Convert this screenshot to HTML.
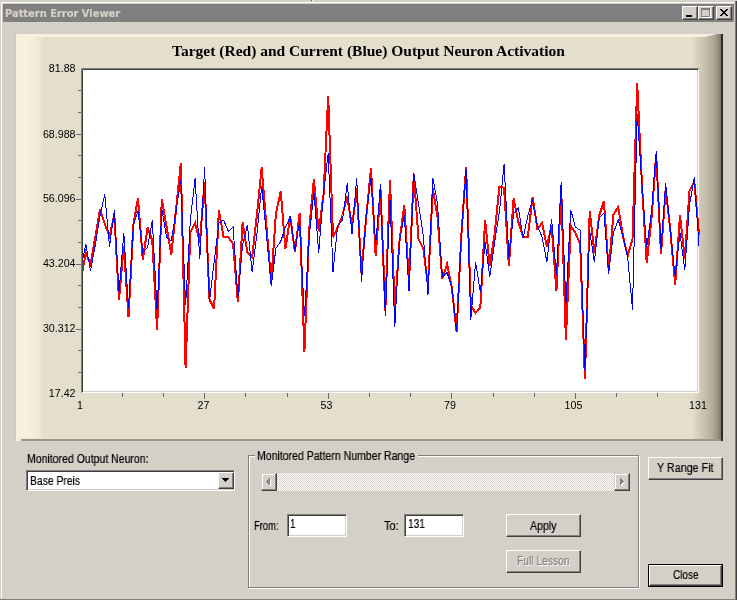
<!DOCTYPE html>
<html><head><meta charset="utf-8"><title>Pattern Error Viewer</title>
<style>
html,body{margin:0;padding:0}
body{width:737px;height:600px;overflow:hidden;background:#d4d0c8;position:relative;font-family:"Liberation Sans",sans-serif;font-size:12px;color:#000}
div,span{position:absolute;box-sizing:border-box}
.t{will-change:transform;white-space:nowrap;transform-origin:0 0;line-height:14px;height:14px;-webkit-text-stroke:0.2px currentColor}
.btn{background:#d4d0c8;border:1px solid;border-color:#fff #404040 #404040 #fff;box-shadow:inset -1px -1px 0 #808080,inset 1px 1px 0 #d4d0c8}
.sbtn{background:#d4d0c8;border:1px solid;border-color:#d4d0c8 #404040 #404040 #d4d0c8;box-shadow:inset -1px -1px 0 #808080,inset 1px 1px 0 #fff}
.sunk{background:#fff;border:1px solid;border-color:#808080 #fff #fff #808080;box-shadow:inset 1px 1px 0 #404040,inset -1px -1px 0 #d4d0c8}
</style></head><body>
<!-- window frame -->
<div style="left:0;top:599px;width:737px;height:1px;background:#808080"></div>
<div style="left:735px;top:1px;width:1px;height:599px;background:#808080"></div>
<div style="left:736px;top:1px;width:1px;height:599px;background:#404040"></div>
<div style="left:1px;top:2px;width:733px;height:1px;background:#fff"></div>
<div style="left:1px;top:2px;width:1px;height:596px;background:#fff"></div>
<div style="left:311px;top:0;width:1px;height:1px;background:#505050"></div><div style="left:312px;top:0;width:1px;height:1px;background:#fff"></div>
<!-- title bar -->
<div style="left:3px;top:4px;width:731px;height:18px;background:#808080"></div>
<span class="t" id="ttl" style="left:4.5px;top:7px;font-family:'DejaVu Sans Condensed','DejaVu Sans','Liberation Sans',sans-serif;font-weight:bold;font-size:11px;color:#d4d0c8">Pattern Error Viewer</span>
<div class="btn" style="left:682px;top:6px;width:16px;height:14px"><div style="left:3px;top:8px;width:6px;height:2px;background:#000"></div></div>
<div class="btn" style="left:698px;top:6px;width:16px;height:14px"><div style="left:2px;top:1px;width:9px;height:9px;border:1px solid #808080;border-top-width:2px;box-shadow:1px 1px 0 #fff"></div></div>
<div class="btn" style="left:716px;top:6px;width:16px;height:14px"><svg style="position:absolute;left:3px;top:2px" width="8" height="7" viewBox="0 0 8 7"><path d="M0 0h2v1h1v1h2v-1h1v-1h2v1h-1v1h-1v1h-1v1h1v1h1v1h1v1h-2v-1h-1v-1h-2v1h-1v1h-2v-1h1v-1h1v-1h1v-1h-1v-1h-1v-1h-1z" fill="#000"/></svg></div>

<!-- chart panel -->
<div id="panel" style="left:15px;top:34px;width:708px;height:407px;background:#e4decd"></div>
<div style="left:14px;top:34px;width:30px;height:407px;background:linear-gradient(90deg,#d2cbbd 0,#d2cbbd 1px,#d3cbb8 1px,#d3cbb8 2px,#f7f0df 2px,#f7f0df 13px,#f3ecda 20px,#ebe4d3 27px,#e4decd 30px)"></div>
<div style="left:690px;top:34px;width:33px;height:407px;background:linear-gradient(90deg,#e4decd 0,#e4decd 2px,#d4cdbc 9px,#c8c1b0 14px,#bab3a2 20px,#a8a191 25px,#989282 27.5px,#807a6c 30.5px,#807a6c 31px,#2e2a22 31px,#2e2a22 33px)"></div>
<div style="left:16px;top:34px;width:701px;height:3px;background:#f7f0de;clip-path:polygon(0 0,100% 0,689px 100%,0 100%)"></div>
<div style="left:21px;top:439px;width:700px;height:2px;background:#9c9787"></div>
<div style="left:21px;top:438px;width:670px;height:1px;background:#e9e3d2"></div>

<svg style="position:absolute;left:0;top:0;will-change:transform" width="737" height="600" viewBox="0 0 737 600" font-family="'Liberation Sans',sans-serif">
<rect x="81" y="68" width="618" height="325" fill="#fff"/>
<path d="M81.5 393V68.5H699" fill="none" stroke="#808080"/>
<path d="M82.5 392V69.5H698" fill="none" stroke="#404040"/>
<path d="M83 391.5H697.5V70" fill="none" stroke="#d4d0c8"/>
<g stroke="#6a6a6a" stroke-width="1" id="ticks" shape-rendering="crispEdges"><path d="M78 90.5H81"/><path d="M78 112.5H81"/><path d="M76 134.5H81"/><path d="M78 155.5H81"/><path d="M78 177.5H81"/><path d="M76 199.5H81"/><path d="M78 220.5H81"/><path d="M78 242.5H81"/><path d="M76 264.5H81"/><path d="M78 285.5H81"/><path d="M78 307.5H81"/><path d="M76 329.5H81"/><path d="M78 350.5H81"/><path d="M78 372.5H81"/><path d="M122.5 393V397"/><path d="M163.5 393V397"/><path d="M204.5 393V399"/><path d="M245.5 393V397"/><path d="M287.5 393V397"/><path d="M328.5 393V399"/><path d="M369.5 393V397"/><path d="M410.5 393V397"/><path d="M451.5 393V399"/><path d="M493.5 393V397"/><path d="M534.5 393V397"/><path d="M575.5 393V399"/><path d="M616.5 393V397"/><path d="M657.5 393V397"/></g>
<g font-size="10.67" text-anchor="end" fill="#000">
<text x="75.5" y="72">81.88</text><text x="75.5" y="137.5">68.988</text><text x="75.5" y="202">56.096</text>
<text x="75.5" y="267">43.204</text><text x="75.5" y="332">30.312</text><text x="75.5" y="397">17.42</text>
</g>
<g font-size="10.67" text-anchor="middle" fill="#000">
<text x="80" y="409">1</text><text x="203.5" y="409">27</text><text x="326.5" y="409">53</text>
<text x="450" y="409">79</text><text x="573.5" y="409">105</text><text x="698" y="409">131</text>
</g>
<text x="368.5" y="56" text-anchor="middle" font-family="'Liberation Serif',serif" font-weight="bold" font-size="15.5">Target (Red) and Current (Blue) Output Neuron Activation</text>
<clipPath id="cp"><rect x="83" y="70" width="617" height="322"/></clipPath>
<g clip-path="url(#cp)"><polyline points="81.0,279.5 85.8,252.5 90.5,264.5 95.3,237.0 100.0,209.6 104.8,224.0 109.5,236.5 114.3,214.6 119.0,299.6 123.8,245.8 128.5,317.3 133.3,225.6 138.0,197.8 142.8,260.0 147.6,227.2 152.3,240.7 157.1,329.5 161.8,199.5 166.6,227.0 171.3,255.0 176.1,209.0 180.8,163.2 185.6,368.2 190.3,232.3 195.1,223.0 199.8,242.4 204.6,182.0 209.4,298.8 214.1,308.9 218.9,210.4 223.6,237.3 228.4,237.3 233.1,244.0 237.9,302.1 242.6,222.2 247.4,252.5 252.1,257.5 256.9,215.0 261.7,167.4 266.4,225.6 271.2,282.0 275.9,213.8 280.7,191.0 285.4,249.1 290.2,216.3 294.9,251.6 299.7,212.9 304.4,351.8 309.2,229.0 313.9,179.3 318.7,231.4 323.5,195.0 328.2,96.0 333.0,237.3 337.7,227.2 342.5,215.5 347.2,196.1 352.0,227.2 356.7,188.5 361.5,272.7 366.2,217.0 371.0,168.4 375.7,255.9 380.5,189.4 385.3,310.6 390.0,180.1 394.8,311.4 399.5,240.7 404.3,205.4 409.0,282.8 413.8,174.0 418.5,239.0 423.3,248.3 428.0,285.5 432.8,188.5 437.5,217.0 442.3,278.8 447.1,263.9 451.8,287.5 456.6,332.0 461.3,236.0 466.1,167.4 470.8,305.5 475.6,313.0 480.3,308.0 485.1,220.5 489.8,266.0 494.6,234.0 499.4,186.8 504.1,187.7 508.9,266.0 513.6,198.6 518.4,222.2 523.1,236.5 527.9,236.5 532.6,197.0 537.4,229.0 542.1,223.0 546.9,246.6 551.6,225.6 556.4,291.2 561.2,188.5 565.9,340.2 570.7,225.6 575.4,233.0 580.2,244.0 584.9,379.1 589.7,211.2 594.4,252.5 599.2,215.5 603.9,201.1 608.7,271.0 613.4,214.6 618.2,207.0 623.0,236.5 627.7,255.9 632.5,239.0 637.2,83.3 642.0,185.0 646.7,263.0 651.5,218.8 656.2,154.0 661.0,254.2 665.7,188.5 670.5,232.3 675.2,284.5 680.0,215.3 684.8,258.5 689.5,191.0 694.3,181.5 699.0,235.0" fill="none" stroke="#ff0000" stroke-width="2" stroke-linejoin="miter" shape-rendering="crispEdges"/>
<polyline points="81.0,267.6 85.8,244.0 90.5,271.0 95.3,245.0 100.0,216.0 104.8,194.4 109.5,246.6 114.3,210.4 119.0,292.0 123.8,233.1 128.5,308.0 133.3,225.6 138.0,211.2 142.8,252.5 147.6,247.4 152.3,220.5 157.1,310.3 161.8,208.7 166.6,237.3 171.3,240.7 176.1,211.0 180.8,180.0 185.6,305.3 190.3,220.5 195.1,178.4 199.8,259.2 204.6,167.4 209.4,302.1 214.1,262.0 218.9,223.0 223.6,220.2 228.4,231.4 233.1,227.2 237.9,297.0 242.6,245.0 247.4,224.7 252.1,272.0 256.9,234.0 261.7,186.0 266.4,234.0 271.2,286.1 275.9,248.3 280.7,241.5 285.4,227.2 290.2,217.1 294.9,250.8 299.7,220.5 304.4,316.4 309.2,237.0 313.9,191.9 318.7,252.5 323.5,193.6 328.2,153.2 333.0,271.8 337.7,225.6 342.5,220.5 347.2,183.5 352.0,234.0 356.7,177.6 361.5,281.9 366.2,215.5 371.0,178.4 375.7,244.0 380.5,184.3 385.3,316.4 390.0,200.0 394.8,326.5 399.5,240.7 404.3,215.5 409.0,291.2 413.8,173.4 418.5,203.7 423.3,235.7 428.0,294.6 432.8,177.6 437.5,203.7 442.3,277.0 447.1,272.6 451.8,287.0 456.6,332.4 461.3,236.0 466.1,169.1 470.8,319.5 475.6,262.0 480.3,292.0 485.1,242.4 489.8,276.5 494.6,242.4 499.4,212.0 504.1,164.1 508.9,257.5 513.6,213.8 518.4,207.9 523.1,238.2 527.9,215.5 532.6,199.5 537.4,225.6 542.1,237.3 546.9,262.2 551.6,218.8 556.4,275.2 561.2,181.8 565.9,303.8 570.7,209.6 575.4,227.0 580.2,230.3 584.9,369.9 589.7,231.4 594.4,262.0 599.2,218.0 603.9,213.0 608.7,273.5 613.4,233.0 618.2,219.7 623.0,236.5 627.7,257.5 632.5,309.5 637.2,113.6 642.0,185.0 646.7,247.4 651.5,212.0 656.2,151.2 661.0,249.1 665.7,183.5 670.5,232.3 675.2,276.9 680.0,233.4 684.8,270.0 689.5,205.4 694.3,177.2 699.0,246.0" fill="none" stroke="#0000ff" stroke-width="1" stroke-linejoin="miter" shape-rendering="crispEdges"/></g>
</svg>

<!-- controls -->
<span class="t" style="left:26.5px;top:452px;transform:scaleX(0.8757);">Monitored Output Neuron:</span>
<div class="sunk" style="left:26px;top:470px;width:209px;height:21px"></div>
<span class="t" style="left:30px;top:474px;transform:scaleX(0.8616);">Base Preis</span>
<div class="btn" style="left:218px;top:472px;width:16px;height:17px"><svg style="position:absolute;left:3px;top:5px" width="7" height="4" viewBox="0 0 7 4" shape-rendering="crispEdges"><path d="M0 0h7v1h-1v1h-1v1h-1v1h-1v-1h-1v-1h-1v-1h-1z" fill="#000"/></svg></div>
<div style="left:249px;top:456px;width:391px;height:133px;border:1px solid #fff"></div>
<div style="left:248px;top:455px;width:391px;height:133px;border:1px solid #808080"></div>
<div style="left:255px;top:449px;width:163px;height:12px;background:#d4d0c8"></div>
<span class="t" style="left:257.3px;top:449px;transform:scaleX(0.8773);">Monitored Pattern Number Range</span>
<div style="left:261px;top:473px;width:369px;height:18px;background:#d4d0c8;background-image:repeating-conic-gradient(#fff 0 25%,#d4d0c8 0 50%);background-size:2px 2px"></div>
<div class="sbtn" style="left:261px;top:473px;width:16px;height:18px"><svg style="position:absolute;left:4px;top:4px" width="5" height="8" viewBox="0 0 5 8" shape-rendering="crispEdges"><path d="M4 1h1v7h-1v-1h-1v-1h-1v-1h-1v-1h1v-1h1v-1h1z" fill="#fff"/><path d="M3 0h1v7h-1v-1h-1v-1h-1v-1h-1v-1h1v-1h1v-1h1z" fill="#808080"/></svg></div>
<div class="sbtn" style="left:614px;top:473px;width:16px;height:18px"><svg style="position:absolute;left:5px;top:4px" width="5" height="8" viewBox="0 0 5 8" shape-rendering="crispEdges"><path d="M1 1h1v1h1v1h1v1h1v1h-1v1h-1v1h-1v1h-1z" fill="#fff"/><path d="M0 0h1v1h1v1h1v1h1v1h-1v1h-1v1h-1v1h-1z" fill="#808080"/></svg></div>
<span class="t" style="left:254px;top:519px;transform:scaleX(0.7817);">From:</span>
<div class="sunk" style="left:287px;top:514px;width:60px;height:23px"></div>
<span class="t" style="left:290px;top:517px;transform:scaleX(0.8224);">1</span>
<span class="t" style="left:384px;top:519px;transform:scaleX(0.9054);">To:</span>
<div class="sunk" style="left:404px;top:514px;width:60px;height:23px"></div>
<span class="t" style="left:407.5px;top:517px;transform:scaleX(0.8487);">131</span>
<div class="btn" style="left:506px;top:514px;width:75px;height:23px"></div>
<span class="t" style="left:530px;top:519px;transform:scaleX(0.8824);">Apply</span>
<div class="btn" style="left:506px;top:550px;width:75px;height:23px"></div>
<span class="t" style="left:516.5px;top:554px;transform:scaleX(0.8554);color:#808080;text-shadow:1px 1px 0 #fff">Full Lesson</span>
<div class="btn" style="left:648px;top:457px;width:75px;height:23px"></div>
<span class="t" style="left:656.5px;top:461px;transform:scaleX(0.8946);">Y Range Fit</span>
<div style="left:648px;top:564px;width:75px;height:23px;border:1px solid #000"><div class="btn" style="left:0;top:0;width:73px;height:21px"></div></div>
<span class="t" style="left:672.5px;top:568px;transform:scaleX(0.8310);">Close</span>
</body></html>
